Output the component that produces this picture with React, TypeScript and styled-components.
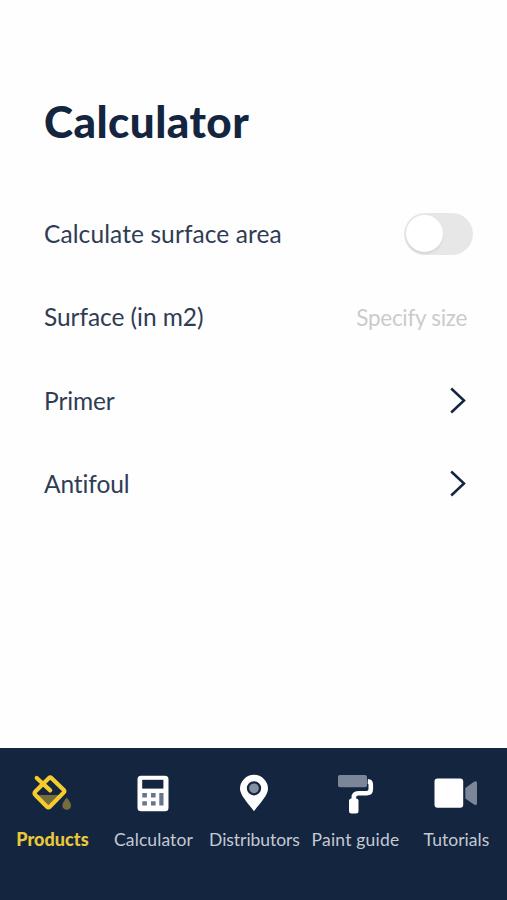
import React from "react";
import styled, { createGlobalStyle } from "styled-components";

const Global = createGlobalStyle`
  * { box-sizing: border-box; }
  body { margin: 0; background: #fefefe; font-family: Lato, sans-serif; }
`;

const Screen = styled.div`
  display: flex;
  flex-direction: column;
  height: 900px;
  width: 507px;
  overflow: hidden;
  color: #14253f;
`;

const Content = styled.main`
  flex: 1;
  padding: 91px 34px 0 44px;
`;

const Title = styled.h1`
  margin: 0;
  height: 101px;
  line-height: 60px;
  font-size: 44px;
  font-weight: 900;
  letter-spacing: 0.45px;
  white-space: nowrap;
`;

const Row = styled.div`
  display: flex;
  align-items: center;
  justify-content: space-between;
  height: 83.5px;
`;

const Label = styled.span<{ $spacing: number }>`
  font-size: 24.5px;
  line-height: 32px;
  padding-bottom: 0.5px;
  color: #2f3c54;
  letter-spacing: ${(p) => p.$spacing}px;
  white-space: nowrap;
`;

const Hint = styled.span`
  font-size: 22.5px;
  line-height: 32px;
  padding-top: 1px;
  color: #cbcbcd;
  margin-right: 6px;
  letter-spacing: -0.3px;
  white-space: nowrap;
`;

const Switch = styled.button`
  width: 69px;
  height: 42px;
  padding: 2px;
  border: 0;
  border-radius: 21px;
  background: #e7e7e8;
`;

const Knob = styled.span`
  display: block;
  width: 37px;
  height: 37px;
  border-radius: 50%;
  background: #fff;
  box-shadow: 0 2px 2px rgba(0, 0, 0, 0.08);
`;

const Chevron = styled.svg`
  width: 18px;
  height: 28px;
  margin: 0 6px 2px 0;
`;

const Nav = styled.nav`
  display: grid;
  grid-template-columns: repeat(5, 101px);
  justify-content: center;
  height: 152px;
  padding-top: 23px;
  background: #14253f;
`;

const Tab = styled.a`
  display: flex;
  flex-direction: column;
  align-items: center;
`;

const Icon = styled.svg`
  width: 48px;
  height: 44px;
  flex: none;
`;

const TabLabel = styled.span<{ $active?: boolean; $spacing: number }>`
  margin-top: ${(p) => (p.$active ? 12 : 13)}px;
  padding-left: 2px;
  line-height: 24px;
  font-size: ${(p) => (p.$active ? 18 : 17.5)}px;
  font-weight: ${(p) => (p.$active ? 900 : 400)};
  color: ${(p) => (p.$active ? "#e9c83b" : "#c3cad4")};
  letter-spacing: ${(p) => p.$spacing}px;
  white-space: nowrap;
`;

const Next = () => (
  <Chevron viewBox="0 0 18 28" fill="none" stroke="#14253f" strokeWidth="2.5">
    <path d="M2.2 2.5 15 14.5 2.2 26.5" />
  </Chevron>
);

const tabs = [
  {
    name: "Products",
    spacing: 0.05,
    icon: (
      <>
        <path d="M8 24h27L20 38Z" fill="#756b3b" />
        <path
          d="M21 7 7.6 20.2q-2 2 0 4L19 35.8q1.4 1.4 2.8 0L35.8 21.4q1.2-1.2 0-2.4L23.4 7q-1.2-1.2-2.4 0ZM8.7 7 22.2 19.4"
          fill="none" stroke="#f6cb2d" strokeWidth="4.2" strokeLinecap="round" strokeLinejoin="round"
        />
        <path d="M38.7 26.4q4.4 5.4 4.4 8a4.4 4.4 0 0 1-8.8 0q0-2.6 4.4-8Z" fill="#756b3b" />
      </>
    ),
  },
  {
    name: "Calculator",
    spacing: 0.1,
    icon: (
      <>
        <rect x="8.5" y="4.8" width="31" height="35.4" rx="3.5" fill="#fff" />
        <path d="M13.2 8.8h21.2v8.8H13.2Z" fill="#14253f" />
        <path
          d="M13.3 22h4.6v4.4h-4.6ZM22 22h4.6v4.4H22ZM13.3 30.2h4.6v4.4h-4.6ZM22 30.2h4.6v4.4H22ZM30.3 22h4.2v12.6h-4.2Z"
          fill="#69758a"
        />
      </>
    ),
  },
  {
    name: "Distributors",
    spacing: -0.05,
    icon: (
      <>
        <path d="M24 3.8a14 14 0 0 0-14 14C10 24 17 31 24 40.2 31 31 38 24 38 17.8a14 14 0 0 0-14-14Z" fill="#fff" />
        <circle cx="24" cy="17.3" r="6" fill="#8390a1" stroke="#14253f" strokeWidth="2.3" />
      </>
    ),
  },
  {
    name: "Paint guide",
    spacing: 0.2,
    icon: (
      <>
        <rect x="7" y="4" width="29" height="12.2" rx="2" fill="#7b8798" />
        <path
          d="M36.8 10.4q3 .2 3 3.4V18q0 4.2-4.2 4.2h-8.2q-4.6 0-4.6 4.2v3"
          fill="none" stroke="#fff" strokeWidth="4.6"
        />
        <rect x="18" y="27.5" width="9.5" height="15" rx="2.5" fill="#fff" />
      </>
    ),
  },
  {
    name: "Tutorials",
    spacing: 0.05,
    icon: (
      <>
        <rect x="2.5" y="7.6" width="28.7" height="29.2" rx="3" fill="#fff" />
        <path d="M33.3 17 42 10.8q3-1.8 3 1.2V32q0 3-3 1.4l-8.7-6Z" fill="#7b8798" />
      </>
    ),
  },
];

export default function App() {
  return (
    <Screen>
      <Global />
      <Content>
        <Title>Calculator</Title>
        <Row>
          <Label $spacing={0.1}>Calculate surface area</Label>
          <Switch role="switch" aria-checked={false} aria-label="Calculate surface area">
            <Knob />
          </Switch>
        </Row>
        <Row>
          <Label $spacing={-0.05}>Surface (in m2)</Label>
          <Hint>Specify size</Hint>
        </Row>
        <Row>
          <Label $spacing={-0.1}>Primer</Label>
          <Next />
        </Row>
        <Row>
          <Label $spacing={-0.1}>Antifoul</Label>
          <Next />
        </Row>
      </Content>
      <Nav>
        {tabs.map((tab, i) => (
          <Tab key={tab.name}>
            <Icon viewBox="0 0 48 44">{tab.icon}</Icon>
            <TabLabel $active={i === 0} $spacing={tab.spacing}>{tab.name}</TabLabel>
          </Tab>
        ))}
      </Nav>
    </Screen>
  );
}
